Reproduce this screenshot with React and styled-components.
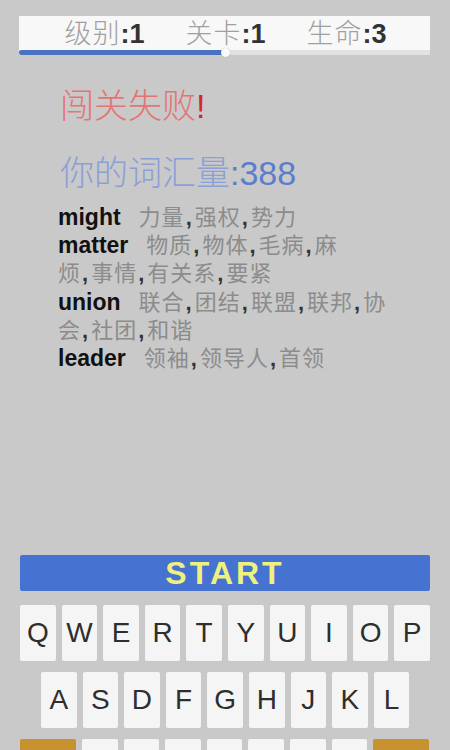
import React from "react";
import styled, { createGlobalStyle } from "styled-components";

const Global = createGlobalStyle`
  html, body { margin: 0; padding: 0; background: #c9c9c9; overflow: hidden; }
  body { width: 450px; height: 750px; font-family: "Liberation Sans", "Noto Sans CJK SC", sans-serif; }
`;

const Page = styled.div`
  padding: 16px 20px 0 19px;
  box-sizing: border-box;
  width: 450px;
  height: 750px;
  overflow: hidden;
`;

const Header = styled.div`
  background: #f8f8f8;
  height: 34px;
  display: flex;
  justify-content: center;
  align-items: center;
  gap: 41px;
  padding-left: 2px;
`;

const Stat = styled.div`
  font-size: 27px;
  line-height: 34px;
  white-space: nowrap;
`;

const StatLabel = styled.span`
  font-family: "Noto Sans CJK SC", sans-serif;
  color: #a0a0a0;
  font-weight: 300;
  letter-spacing: 1px;
`;

const StatValue = styled.span`
  font-family: "Liberation Sans", sans-serif;
  font-weight: bold;
  color: #333;
`;

const Track = styled.div`
  position: relative;
  height: 5px;
  background: #e2e2e2;
`;

const Fill = styled.div`
  height: 100%;
  background: #4a72c0;
  border-radius: 3px 0 0 3px;
`;

const Knob = styled.div`
  position: absolute;
  top: -2px;
  width: 9px;
  height: 9px;
  margin-left: -4px;
  border-radius: 50%;
  background: #fafafa;
  box-shadow: 0 0 1px rgba(0,0,0,0.3);
`;

const Main = styled.div`
  height: 500px;
  padding: 29px 0 0 41px;
  box-sizing: border-box;
`;

const Title = styled.div`
  font-size: 34px;
  line-height: 40px;
  white-space: nowrap;
  margin-bottom: ${p => p.$gap || 0}px;
`;

const Cn = styled.span`
  font-family: "Noto Sans CJK SC", sans-serif;
  font-weight: 300;
  color: ${p => p.$color};
`;

const Latin = styled.span`
  font-family: "Liberation Sans", sans-serif;
  color: ${p => p.$color};
`;

const WordList = styled.div`
  width: 350px;
  margin-left: -2px;
`;

const WordRow = styled.div`
  font-size: 21px;
  line-height: 28.2px;
`;

const Word = styled.span`
  font-family: "Liberation Sans", sans-serif;
  font-weight: bold;
  font-size: 23px;
  line-height: 1;
  color: #111;
  margin-right: 18px;
`;

const Meaning = styled.span`
  font-family: "Noto Sans CJK SC", sans-serif;
  font-size: 22px;
  line-height: 1;
  color: #8c8c8c;
  letter-spacing: 1px;
`;

const Comma = styled.span`
  font-family: "Liberation Sans", sans-serif;
  font-weight: bold;
  color: #333;
  letter-spacing: 0;
  margin: 0 3px 0 1px;
`;

const Bottom = styled.div`
  display: flex;
  flex-direction: column;
  gap: 14px;
  padding-left: 1px;
`;

const StartBar = styled.div`
  height: 36px;
  background: #4673d2;
  border-radius: 2px;
  display: flex;
  justify-content: center;
  align-items: center;
  font-family: "Liberation Sans", sans-serif;
  font-weight: bold;
  font-size: 32px;
  color: #eef27c;
  letter-spacing: 3px;
`;

const Keyboard = styled.div`
  display: flex;
  flex-direction: column;
  gap: 11px;
`;

const KeyRow = styled.div`
  display: flex;
  gap: 6px;
  padding-left: ${p => p.$indent || 0}px;
`;

const Key = styled.div`
  width: ${p => p.$w || 35.6}px;
  height: 56px;
  flex: none;
  background: ${p => (p.$accent ? "#c8912f" : "#f5f5f5")};
  border-radius: 2px;
  display: flex;
  justify-content: center;
  align-items: center;
  font-family: "Liberation Sans", sans-serif;
  font-size: 28px;
  color: #2e2e2e;
`;

const words = [
  { w: "might", m: ["力量,强权,势力"] },
  { w: "matter", m: ["物质,物体,毛病,麻", "烦,事情,有关系,要紧"] },
  { w: "union", m: ["联合,团结,联盟,联邦,协会,社团,和谐"] },
  { w: "leader", m: ["领袖,领导人,首领"] },
];

function MeaningText({ lines }) {
  return (
    <Meaning>
      {lines.map((line, li) => {
        const parts = line.split(",");
        return (
          <React.Fragment key={li}>
            {li > 0 && <br />}
            {parts.map((p, i) => (
              <React.Fragment key={i}>
                {p}
                {i < parts.length - 1 && <Comma>,</Comma>}
              </React.Fragment>
            ))}
          </React.Fragment>
        );
      })}
    </Meaning>
  );
}

export default function App() {
  const progress = 0.5;
  return (
    <>
      <Global />
      <Page>
        <Header>
          <Stat><StatLabel>级别</StatLabel><StatValue>:1</StatValue></Stat>
          <Stat><StatLabel>关卡</StatLabel><StatValue>:1</StatValue></Stat>
          <Stat><StatLabel>生命</StatLabel><StatValue>:3</StatValue></Stat>
        </Header>
        <Track>
          <Fill style={{ width: `${progress * 100}%` }} />
          <Knob style={{ left: `${progress * 100}%` }} />
        </Track>
        <Main>
          <Title $gap={25}>
            <Cn $color="#e47474">闯关失败</Cn>
            <Latin $color="#cf2a2a">!</Latin>
          </Title>
          <Title $gap={11}>
            <Cn $color="#8ba0d6">你的词汇量</Cn>
            <Latin $color="#5a7ecb">:388</Latin>
          </Title>
          <WordList>
            {words.map(x => (
              <WordRow key={x.w}>
                <Word>{x.w}</Word>
                <MeaningText lines={x.m} />
              </WordRow>
            ))}
          </WordList>
        </Main>
        <Bottom>
          <StartBar>START</StartBar>
          <Keyboard>
            <KeyRow>
              {"QWERTYUIOP".split("").map(k => <Key key={k}>{k}</Key>)}
            </KeyRow>
            <KeyRow $indent={21}>
              {"ASDFGHJKL".split("").map(k => <Key key={k}>{k}</Key>)}
            </KeyRow>
            <KeyRow>
              <Key $accent $w={56} />
              {"ZXCVBNM".split("").map(k => <Key key={k}>{k}</Key>)}
              <Key $accent $w={56} />
            </KeyRow>
          </Keyboard>
        </Bottom>
      </Page>
    </>
  );
}
